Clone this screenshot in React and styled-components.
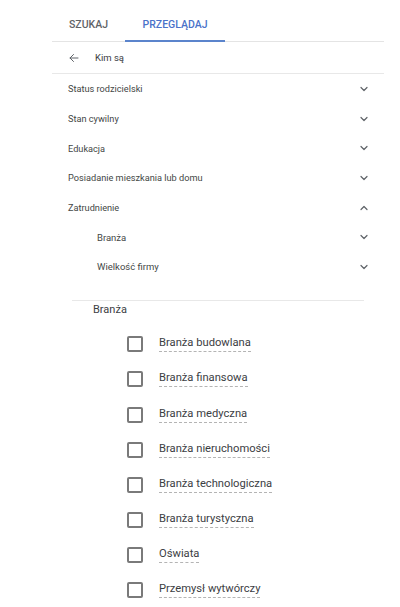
import React from "react";
import styled, { createGlobalStyle } from "styled-components";

const Global = createGlobalStyle`
  body {
    margin: 0;
    background: #ffffff;
    font-family: Roboto, "Liberation Sans", Arial, sans-serif;
  }
`;

const Panel = styled.div`
  width: 332px;
  margin-left: 52px;
`;

const Tabs = styled.div`
  display: flex;
  height: 42px;
  border-bottom: 1px solid #e4e4e4;
  box-sizing: border-box;
`;

const Tab = styled.div`
  display: flex;
  align-items: flex-end;
  justify-content: center;
  width: ${(p) => p.w}px;
  padding-bottom: 9px;
  box-sizing: border-box;
  font-size: 10.5px;
  font-weight: 500;
  text-transform: uppercase;
  color: ${(p) => (p.active ? "#4a72c9" : "#5f6368")};
  border-bottom: 2px solid ${(p) => (p.active ? "#5b84cc" : "transparent")};
  margin-bottom: -1px;
`;

const BackRow = styled.div`
  display: flex;
  align-items: center;
  height: 32px;
  padding-left: 16px;
  gap: 15px;
  border-bottom: 1px solid #e8e8e8;
  box-sizing: border-box;
  font-size: 9.5px;
  color: #3c4043;
`;

const Row = styled.div`
  display: flex;
  align-items: center;
  justify-content: space-between;
  height: 29.7px;
  padding-left: ${(p) => (p.nested ? 45 : 16)}px;
  padding-right: 14px;
  font-size: ${(p) => (p.nested ? 9.5 : 9.2)}px;
  color: #444746;
`;

const Chevron = ({ up }) => (
  <svg width="12" height="12" viewBox="0 0 24 24" fill="none" stroke="#5f6368" strokeWidth="2.4" strokeLinecap="round" strokeLinejoin="round">
    <path d={up ? "M6 15l6-6 6 6" : "M6 9l6 6 6-6"} />
  </svg>
);

const Section = styled.div`
  margin: 18px 20px 0 20px;
  border-top: 1px solid #e8e8e8;
  border-bottom: 1px solid #e8e8e8;
`;

const SectionTitle = styled.div`
  padding: 2px 0 0 21px;
  font-size: 11px;
  color: #3c4043;
  height: 16px;
`;

const Options = styled.div`
  display: flex;
  flex-direction: column;
  padding: 8px 0 0 55px;
`;

const Option = styled.label`
  display: flex;
  align-items: center;
  gap: 16px;
  height: 35.1px;
`;

const Box = styled.span`
  width: 12px;
  height: 12px;
  border: 2px solid #7a7a7a;
  border-radius: 2px;
  flex: none;
`;

const Label = styled.span`
  font-size: 11.2px;
  color: #3c4043;
  border-bottom: 1px dashed #b4b4b4;
  line-height: 14px;
  padding-bottom: 1px;
`;

const rows = [
  "Status rodzicielski",
  "Stan cywilny",
  "Edukacja",
  "Posiadanie mieszkania lub domu",
];

const options = [
  "Branża budowlana",
  "Branża finansowa",
  "Branża medyczna",
  "Branża nieruchomości",
  "Branża technologiczna",
  "Branża turystyczna",
  "Oświata",
  "Przemysł wytwórczy",
];

export default function App() {
  return (
    <>
      <Global />
      <Panel>
        <Tabs>
          <Tab w={73}>Szukaj</Tab>
          <Tab w={100} active>Przeglądaj</Tab>
        </Tabs>
        <BackRow>
          <svg width="12" height="12" viewBox="0 0 24 24" fill="none" stroke="#5f6368" strokeWidth="2" strokeLinecap="round" strokeLinejoin="round">
            <path d="M20 12H4M11 5l-7 7 7 7" />
          </svg>
          <span>Kim są</span>
        </BackRow>
        {rows.map((r) => (
          <Row key={r}>
            <span>{r}</span>
            <Chevron />
          </Row>
        ))}
        <Row>
          <span>Zatrudnienie</span>
          <Chevron up />
        </Row>
        <Row nested>
          <span>Branża</span>
          <Chevron />
        </Row>
        <Row nested>
          <span>Wielkość firmy</span>
          <Chevron />
        </Row>
        <Section>
          <SectionTitle>Branża</SectionTitle>
          <Options>
            {options.map((o) => (
              <Option key={o}>
                <Box />
                <Label>{o}</Label>
              </Option>
            ))}
          </Options>
        </Section>
      </Panel>
    </>
  );
}
